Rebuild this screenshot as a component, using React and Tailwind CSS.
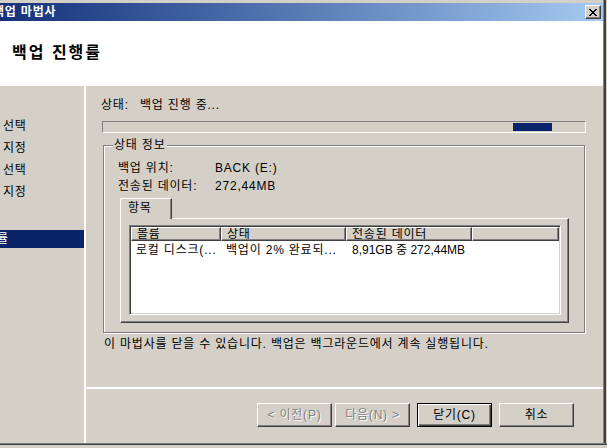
const raised = 'border border-t-white border-l-white border-r-[#404040] border-b-[#404040] shadow-[inset_-1px_-1px_0_#808080]'

const columns = [
  { label: '볼륨', value: '로컬 디스크(...', w: 'w-[90px]', cell: 'pl-[5px]' },
  { label: '상태', value: '백업이 2% 완료되...', w: 'w-[125px]', cell: 'pl-[5px]' },
  { label: '전송된 데이터', value: '8,91GB 중 272,44MB', w: 'w-[126px]', cell: 'pl-[6px] tracking-normal' },
  { label: '', value: '', w: 'w-[87px]', cell: 'pl-[5px]' },
]

const steps = ['선택', '지정', '선택', '지정', '']

function TitleBar() {
  return (
    <div className="h-[18px] flex items-center justify-between bg-gradient-to-r from-[#16307a] to-[#a6caf0]">
      <span className="-ml-[7px] font-bold text-white leading-[14px]">백업 마법사</span>
      <button className={`w-[16px] h-[14px] mr-[2px] bg-[#d4d0c8] flex items-center justify-center ${raised}`}>
        <svg width="8" height="7" viewBox="0 0 8 7" shapeRendering="crispEdges">
          <path d="M0 0h2v1h1v1h2v-1h1v-1h2v1h-1v1h-1v1h-1v1h1v1h1v1h1v1h-2v-1h-1v-1h-2v1h-1v1h-2v-1h1v-1h1v-1h1v-1h-1v-1h-1v-1h-1z" fill="#000" />
        </svg>
      </button>
    </div>
  )
}

function WizButton({ children, disabled, primary }) {
  const base = 'w-[75px] h-[24px] bg-[#d4d0c8] flex items-center justify-center leading-[14px]'
  const frame = primary
    ? 'border border-black shadow-[inset_1px_1px_0_#fff,inset_-1px_-1px_0_#404040,inset_-2px_-2px_0_#808080]'
    : raised
  return (
    <button className={`${base} ${frame} ${disabled ? 'text-[#808080] [text-shadow:1px_1px_0_#fff]' : 'text-black'}`}>
      {children}
    </button>
  )
}

export default function App() {
  return (
    <div className="w-[607px] h-[448px] overflow-hidden bg-[#d4d0c8] flex flex-col text-[12px] tracking-[0.8px] text-black font-['Liberation_Sans','Noto_Sans_CJK_KR',sans-serif]">
      <div className="flex flex-1 min-h-0">
        <div className="w-[603px] flex flex-col">
          <div className="h-[3px] bg-[#d4d0c8]" />
          <TitleBar />

          {/* header */}
          <div className="h-[65px] bg-white pl-[12px] pt-[22px]">
            <h1 className="text-[16px] leading-[20px] font-bold tracking-[2px]">백업 진행률</h1>
          </div>

          <div className="flex flex-1 min-h-0">
            {/* step list */}
            <div className="w-[84px] overflow-hidden pt-[29px] flex flex-col">
              {steps.map((s, i) => (
                <div key={i} className="h-[22px] leading-[22px] pl-[3px] whitespace-nowrap">{s}</div>
              ))}
              <div className="mt-[5px] h-[18px] leading-[18px] bg-[#0a246a] text-white whitespace-nowrap -ml-[3px]">률</div>
            </div>
            <div className="w-[2px] bg-white" />

            <div className="flex-1 flex flex-col">
              <div className="h-[301px] pl-[16px] pr-[17px] flex flex-col">
                <div className="mt-[12px] h-[14px] leading-[14px] flex -ml-[1px]">
                  <span className="w-[39px]">상태:</span>
                  <span>백업 진행 중...</span>
                </div>

                {/* progress */}
                <div className="mt-[9px] h-[12px] border border-t-[#808080] border-l-[#808080] border-r-white border-b-white pl-[410px] pt-[1px]">
                  <div className="w-[39px] h-[8px] bg-[#0a246a]" />
                </div>

                {/* group box */}
                <div className="relative mt-[12px] mx-[1px] h-[188px] border border-[#808080] shadow-[inset_1px_1px_0_#fff,1px_1px_0_#fff] pt-[13px]">
                  <span className="absolute -top-[8px] left-[9px] px-[1px] bg-[#d4d0c8] leading-[14px]">상태 정보</span>
                  <div className="pl-[14px] leading-[18px]">
                    <div className="flex"><span className="w-[97px]">백업 위치:</span><span>BACK (E:)</span></div>
                    <div className="flex"><span className="w-[97px]">전송된 데이터:</span><span>272,44MB</span></div>
                  </div>

                  <div className="ml-[16px] mt-[3px] w-[449px]">
                    <div className="flex">
                      <div className="relative z-10 -mb-[1px] w-[52px] h-[21px] bg-[#d4d0c8] border-t border-l border-r border-t-white border-l-white border-r-[#404040] rounded-tl-[2px] shadow-[inset_-1px_0_0_#808080] pl-[7px] pt-[2px] leading-[14px]">
                        항목
                      </div>
                    </div>
                    <div className="h-[105px] border border-t-white border-l-white border-r-[#404040] border-b-[#404040] shadow-[inset_-1px_-1px_0_#808080] pl-[8px] pt-[6px]">
                      <div className="w-[432px] h-[90px] bg-white border border-t-[#808080] border-l-[#808080] border-r-white border-b-white shadow-[inset_1px_1px_0_#404040,inset_-1px_-1px_0_#d4d0c8] p-[1px]">
                        <div className="flex">
                          {columns.map((c, i) => (
                            <div key={i} className={`${c.w} h-[14px] bg-[#d4d0c8] ${raised} pl-[5px] leading-[12px] whitespace-nowrap overflow-hidden`}>
                              {c.label}
                            </div>
                          ))}
                        </div>
                        <div className="flex mt-[1px]">
                          {columns.map((c, i) => (
                            <div key={i} className={`${c.w} ${c.cell} h-[16px] leading-[16px] whitespace-nowrap overflow-hidden`}>
                              {c.value}
                            </div>
                          ))}
                        </div>
                      </div>
                    </div>
                  </div>
                </div>

                <p className="mt-[4px] ml-[2px] leading-[14px] whitespace-nowrap">
                  이 마법사를 닫을 수 있습니다. 백업은 백그라운드에서 계속 실행됩니다.
                </p>
              </div>

              <div className="h-[2px] bg-white" />

              <div className="flex-1 pt-[14px] pr-[29px] flex justify-end">
                <WizButton disabled>&lt; 이전(P)</WizButton>
                <div className="ml-[3px]"><WizButton disabled>다음(N) &gt;</WizButton></div>
                <div className="ml-[7px]"><WizButton primary>닫기(C)</WizButton></div>
                <div className="ml-[7px]"><WizButton>취소</WizButton></div>
              </div>
            </div>
          </div>
        </div>
        <div className="w-[1px] bg-[#808080]" />
        <div className="w-[2px] bg-[#404040]" />
        <div className="w-[1px] bg-[#d4d0c8]" />
      </div>
      <div className="h-[1px] bg-[#808080]" />
      <div className="h-[1px] bg-[#404040]" />
      <div className="h-[3px] bg-[#d4d0c8]" />
    </div>
  )
}
